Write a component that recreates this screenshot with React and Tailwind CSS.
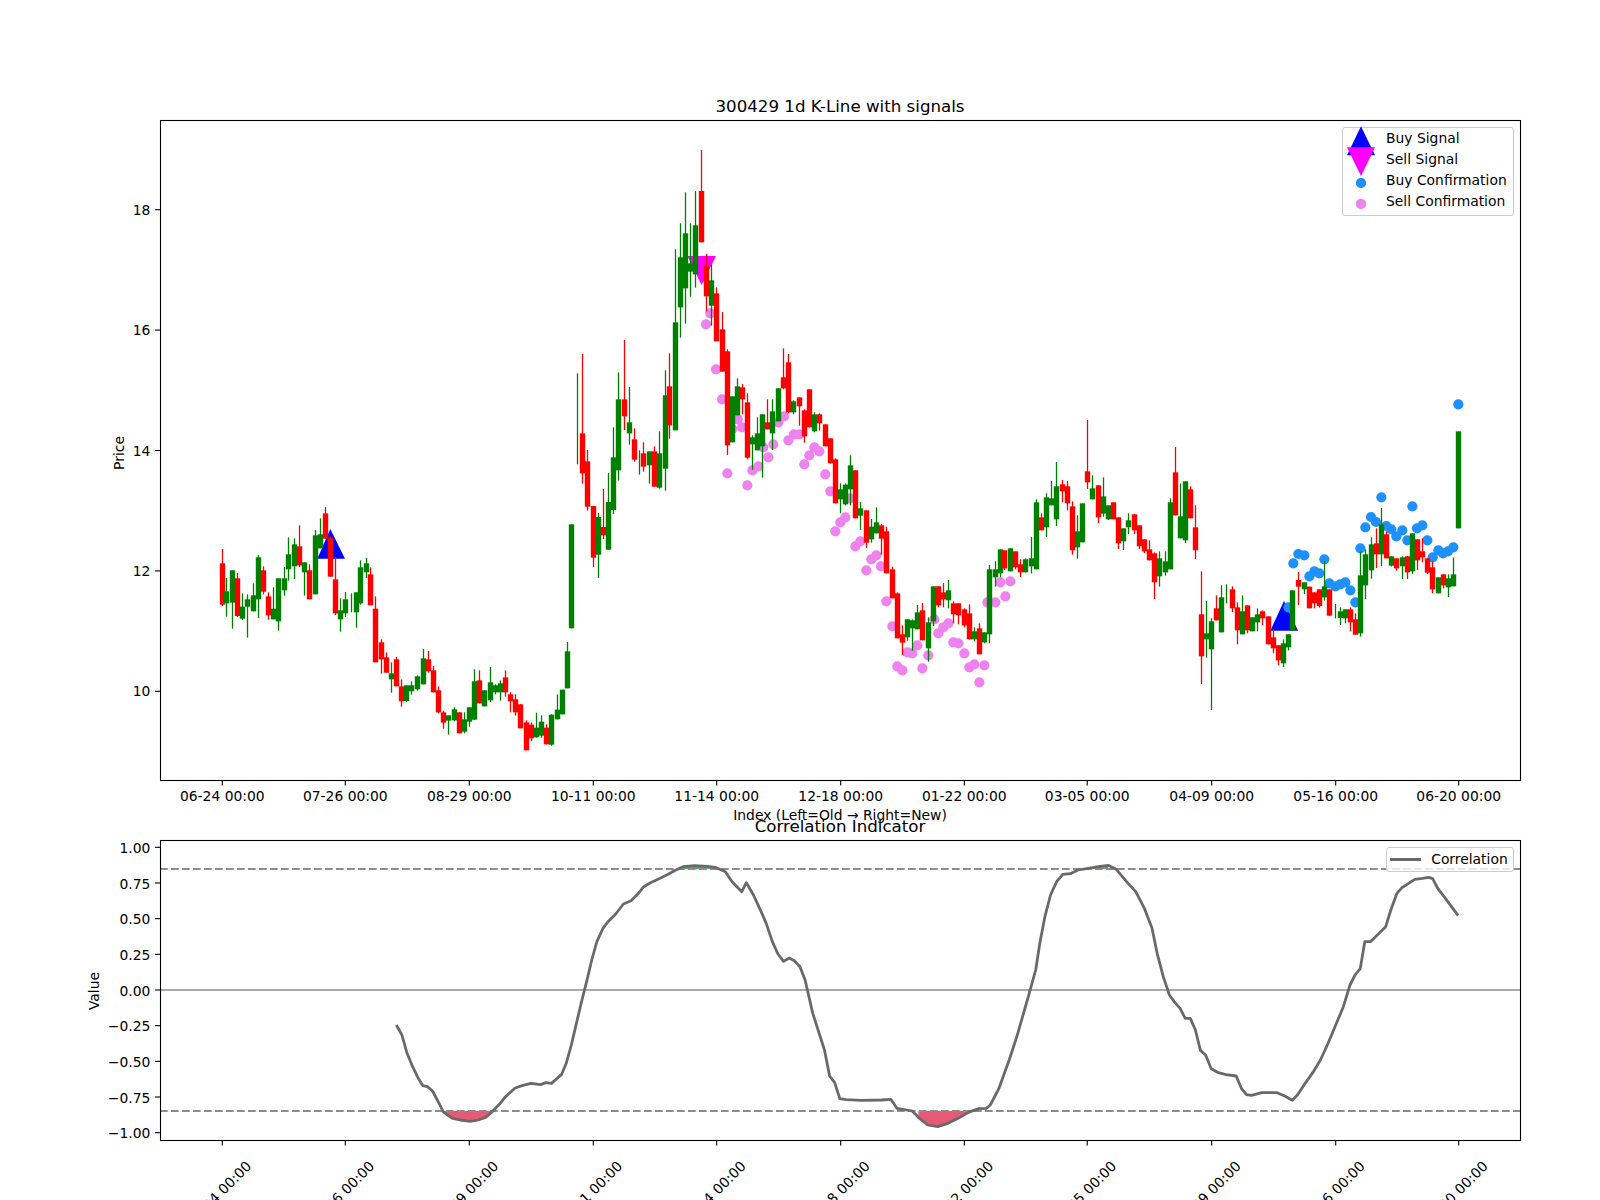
const RED = "#ff0000";
const GREEN = "#008000";

// [x, isRed, wickTop, bodyTop, bodyBottom, wickBottom] measured in crop coordinates
const seg = (x0, y0, rows) =>
  rows.map(([x, r, wt, bt, bb, wb]) => ({
    x: x0 + x / 3,
    r,
    wt: y0 + wt / 3,
    bt: y0 + bt / 3,
    bb: y0 + bb / 3,
    wb: y0 + wb / 3,
  }));

const candles = [
  ...seg(150, 380, [
    [216,1,507,550,674,678],[230,0,594,634,670,710],[246,0,571,571,668,746],[261,1,579,595,708,711],
    [276,0,640,680,716,720],[293,0,643,658,680,773],[309,0,610,646,694,694],[324,0,525,532,658,714],
    [339,1,559,571,635,643],[354,1,637,649,706,719],[369,0,622,686,718,718],[384,0,595,595,724,752],
    [402,0,561,595,631,647],[416,0,472,523,568,602],[432,0,475,493,559,597],[447,1,436,499,556,561],
    [462,0,547,547,577,647],[477,1,553,571,658,658],[495,0,450,466,643,643],[510,0,415,463,505,505],
    [525,1,381,400,476,476],[540,1,470,473,590,590],[555,1,529,598,700,705],[570,0,655,691,718,755],
    [585,0,636,658,700,711],[604,0,640,640,640,697],[618,0,637,637,697,743],[632,0,541,562,670,674],
    [648,0,534,550,577,594],[662,1,562,583,676,676],[677,1,649,686,847,847],[695,1,778,787,838,881],
    [710,1,817,832,878,878],[725,0,847,880,898,938],[740,1,831,838,919,919],[755,1,898,919,964,980],
    [770,0,916,916,963,966],[785,0,904,916,934,944],[803,0,886,889,928,932],[819,0,807,835,913,913],
    [834,1,813,838,874,878],[849,1,858,871,937,937],[864,1,919,931,997,1000],[879,1,992,997,1028,1046],
    [894,0,1006,1006,1022,1064],[912,0,982,988,1021,1024],[927,1,997,997,1060,1060],[942,0,997,1018,1055,1060],
    [957,0,982,982,1025,1040],[972,0,868,904,1019,1020],[987,1,871,901,970,970],[1004,0,931,931,979,979],
    [1020,0,861,907,961,966],[1035,0,913,916,937,943],[1050,0,901,910,937,962],[1065,1,871,892,937,950],
    [1080,1,937,943,964,997],[1095,1,943,958,997,1007],[1112,1,973,973,1045,1045],[1128,1,1021,1027,1111,1111],
    [1143,1,1027,1034,1075,1084],[1158,0,998,1043,1072,1073],[1173,0,1006,1025,1067,1073],[1188,1,1033,1043,1093,1093],
    [1205,0,1003,1004,1094,1097],[1221,0,943,989,1018,1018],[1236,0,929,929,1003,1003],[1251,0,786,814,925,925],
    [1265,0,433,433,745,745],
  ]),
  ...seg(570, 130, [
    [22,0,730,730,730,1003],[37,1,672,910,1030,1061],[53,1,960,994,1130,1142],
  ]),
  ...seg(570, 480, [
    [69,1,78,78,233,261],[84,0,99,111,224,294],[99,1,27,141,166,177],[114,0,-21,66,209,209],
  ]),
  ...seg(570, 130, [
    [130,0,892,982,1140,1152],[145,0,727,808,1021,1052],[162,1,630,808,859,900],[177,0,771,877,910,944],
    [192,1,895,928,989,995],[207,0,961,961,961,1034],[221,1,937,970,1010,1025],[237,0,964,964,1006,1061],
    [254,1,949,964,1070,1070],[269,0,904,970,1073,1076],[285,0,721,796,1016,1082],[298,1,670,769,886,926],
    [315,0,358,577,901,901],[331,0,280,382,532,623],[345,0,187,310,475,581],[362,0,280,400,425,500],
    [377,0,183,286,433,473],[393,1,60,183,337,337],[408,1,372,408,499,545],[423,0,403,451,527,587],
    [438,1,472,490,634,634],[456,1,546,598,725,725],[471,1,658,664,946,975],[486,0,799,799,937,937],
    [501,0,745,769,856,856],[516,1,762,772,808,853],[531,1,790,817,983,988],[546,0,916,922,943,1019],
    [563,0,862,910,961,961],[578,0,853,853,949,1043],[593,1,808,877,898,898],[608,0,808,844,910,960],
    [624,0,775,775,874,874],[639,1,655,742,775,778],[654,1,672,697,847,850],[671,0,811,814,847,853],
    [687,1,802,802,829,887],[702,1,838,841,919,938],[717,1,778,778,892,892],[732,0,847,853,904,907],
    [747,1,850,853,880,902],[765,1,883,883,949,949],[780,1,925,925,1000,1000],[795,1,985,988,1120,1120],
    [810,0,1060,1078,1108,1150],[825,0,1060,1064,1123,1126],[840,0,976,1006,1078,1126],[855,1,1021,1021,1165,1165],
  ]),
  ...seg(800, 400, [
    [182,0,306,325,347,390],[198,1,331,331,428,444],[213,0,357,380,418,428],[228,0,322,367,400,400],
    [243,1,372,376,416,464],[258,1,380,394,520,520],[276,1,500,508,595,595],[291,1,577,580,715,715],
    [306,1,676,703,728,765],[321,0,658,658,712,722],[336,0,658,661,685,752],[351,0,615,637,688,688],
    [366,1,609,631,721,721],[384,0,652,667,745,785],[399,0,559,559,664,678],[414,1,559,559,616,622],
    [429,1,549,577,598,622],[444,0,540,571,601,625],[459,1,604,610,643,670],[474,1,610,610,646,673],
    [492,1,625,628,676,682],[507,1,613,640,718,718],[522,0,682,694,718,724],[537,1,670,685,763,763],
    [552,0,697,697,727,730],[567,0,495,508,703,730],[585,0,484,508,532,560],[600,0,448,448,520,532],
    [614,1,451,451,505,510],[630,0,445,445,514,514],[645,1,454,454,502,508],[660,1,478,493,517,531],
    [675,0,475,478,517,517],[693,0,411,475,499,520],[708,0,298,307,508,508],[723,1,340,352,391,391],
    [738,0,280,292,382,411],[753,0,243,295,316,316],[768,0,186,259,358,378],[786,1,240,253,274,307],
    [801,1,243,259,310,331],[816,1,304,319,451,464],[831,0,346,394,442,476],[846,0,310,310,427,427],
    [861,1,60,214,247,267],[876,0,226,265,298,298],[894,1,256,256,352,369],
  ]),
  ...seg(1080, 400, [
    [69,0,232,289,341,350],[84,0,316,316,358,360],[99,1,307,307,358,358],[114,1,352,352,430,447],
    [129,0,385,385,424,450],[144,0,340,361,382,402],[162,1,343,343,391,402],[177,1,376,376,439,447],
    [192,1,418,418,454,459],[207,1,421,448,481,481],[222,1,457,460,547,597],[237,0,454,475,529,560],
    [255,0,454,484,517,527],[270,0,295,307,508,508],[285,1,141,217,346,346],[300,0,250,349,415,415],
    [315,0,244,244,421,429],[330,1,259,268,355,355],[345,1,316,382,451,477],[363,1,514,643,769,852],
    [378,0,603,700,718,773],[393,0,655,664,748,930],[408,1,586,625,661,661],[423,0,556,592,697,697],
    [438,0,553,553,553,610],[456,1,559,568,625,636],[471,1,607,622,691,733],[486,0,586,634,703,703],
    [501,1,616,616,691,700],[516,0,652,652,694,694],[531,0,625,643,667,694],[546,1,631,634,655,676],
    [564,1,649,649,733,733],[579,1,688,712,745,760],[594,1,736,736,781,796],[609,0,718,730,790,801],
    [624,0,703,703,742,751],
  ]),
  ...seg(1260, 390, [
    [98,0,601,601,722,722],[114,1,546,570,590,645],[132,0,577,577,598,612],[147,1,590,590,655,655],
    [162,1,607,607,640,655],[177,1,598,598,648,653],[192,0,513,589,622,632],[207,1,598,598,677,677],
    [226,0,642,642,642,685],[240,0,652,664,684,705],[255,0,658,658,685,700],[270,1,652,658,697,724],
    [285,1,670,688,734,734],[300,0,484,556,730,740],[315,0,478,493,586,627],[333,0,442,463,541,566],
    [348,1,415,460,493,534],[363,0,354,403,493,528],[378,1,424,433,505,505],[393,0,499,499,527,530],
    [408,1,505,505,535,542],[426,0,499,502,529,567],[441,1,499,499,547,567],[456,0,430,430,544,552],
    [471,1,448,448,511,540],[486,1,445,484,502,517],[501,1,505,505,548,552],[516,1,514,532,598,610],
    [534,0,562,562,610,610],[549,1,553,553,586,595],[564,0,553,565,592,621],[579,0,502,553,589,589],
    [594,0,124,124,415,415],
  ]),
];

const pts = (x0, y0, rows) => rows.map(([x, y]) => [x0 + x / 3, y0 + y / 3]);

const sellDots = [
  ...pts(570, 130, [
    [421,550],[408,583],[438,718],[456,808],[472,1030],[487,897],[516,892],[503,868],[532,1066],[547,1021],
    [565,1009],[580,952],[595,982],[610,943],[625,877],[642,859],[655,931],[672,913],[688,913],
  ]),
  ...pts(800, 400, [
    [13,193],[28,166],[43,142],[58,154],[76,223],[91,274],[150,295],[106,394],[121,367],[136,352],[166,439],
    [181,424],[199,511],[214,478],[229,466],[243,499],[259,604],[277,679],[292,799],[307,811],[322,757],
    [337,760],[352,736],[367,805],[385,766],[403,658],[415,700],[430,682],[445,670],[460,727],[475,730],
    [493,760],[508,802],[523,793],[538,847],[553,796],[562,607],[586,607],[601,547],[616,589],[631,544],
  ]),
];

const buyDots = pts(1260, 390, [
  [85,652],[100,520],[115,492],[133,496],[148,559],[163,544],[178,550],[193,508],[208,580],[226,589],
  [241,583],[256,577],[271,601],[286,637],[301,475],[316,412],[333,381],[348,396],[364,322],[379,408],
  [394,418],[409,439],[427,421],[442,451],[457,349],[471,415],[487,406],[502,451],[518,502],[535,481],
  [549,490],[564,484],[580,472],[595,43],
]);

const curveA = [
  [620,735],[631,765],[641,820],[652,860],[663,895],[672,917],[681,920],[691,933],[702,965],[712,995],[721,1006],
  [730,1015],[745,1020],[765,1024],[780,1020],[795,1012],[806,998],[822,973],[834,950],[853,924],[868,916],[884,910],
  [903,914],[913,908],[924,910],[944,883],[953,850],[963,795],[973,730],[983,665],[993,605],[1003,540],[1013,485],
  [1025,445],[1035,425],[1050,402],[1065,372],[1080,362],[1093,343],[1105,320],[1120,307],[1135,296],[1150,285],
  [1165,272],[1182,260],[1205,257],[1230,259],[1245,262],[1265,275],[1278,305],[1297,335],[1306,308],[1320,345],
  [1335,395],[1345,430],[1357,485],[1368,522],[1379,544],[1390,534],[1400,542],
];
const curveB = [
  [0,560],[10,600],[25,700],[48,810],[58,888],[68,908],[78,956],[90,959],[120,961],[160,960],[178,958],[190,985],
  [220,993],[232,1012],[250,1035],[270,1040],[290,1030],[310,1015],[330,997],[350,986],[365,985],[373,975],[390,925],
  [410,840],[425,770],[440,690],[452,625],[462,570],[470,490],[480,410],[491,345],[503,305],[515,283],[530,281],
  [545,270],[565,265],[585,260],[604,256],[620,268],[640,305],[658,335],[675,385],[690,445],[700,520],[712,590],
  [724,645],[735,668],[745,685],[755,715],[765,715],[775,750],[785,812],[795,825],[806,866],[820,878],[835,884],
  [855,888],[865,925],[875,944],[885,946],[905,938],[935,938],[950,948],[965,961],[975,945],[990,910],[1005,878],
  [1020,840],[1035,790],[1050,735],[1065,680],[1078,615],[1088,585],[1098,566],[1107,485],[1118,485],[1133,463],
  [1148,440],[1158,390],[1170,340],[1180,323],[1205,298],[1220,295],[1232,292],[1240,296],[1250,325],[1265,355],[1290,407],
];
const curve = [
  ...curveA.map(([x, y]) => [80 + x / 1.96, 780 + y / 3]),
  ...curveB.map(([x, y]) => [800 + x / 1.96, 780 + y / 3]),
];

const UPPER = 869;
const LOWER = 1111;

// Contiguous stretches of the curve that lie beyond a threshold, closed along it
const regions = (test, level) => {
  const out = [];
  let cur = [];
  curve.forEach((p) => {
    if (test(p[1])) cur.push(p);
    else if (cur.length) {
      out.push(cur);
      cur = [];
    }
  });
  return out.map((r) => [[r[0][0], level], ...r, [r[r.length - 1][0], level]]);
};
const toPoints = (a) => a.map((p) => p.join(",")).join(" ");

const xTicks = [
  [222.3, "06-24 00:00"],[345.3, "07-26 00:00"],[469.3, "08-29 00:00"],[593.3, "10-11 00:00"],
  [716.7, "11-14 00:00"],[840.7, "12-18 00:00"],[964.3, "01-22 00:00"],[1087.2, "03-05 00:00"],
  [1211.7, "04-09 00:00"],[1335.7, "05-16 00:00"],[1458.7, "06-20 00:00"],
];
const priceTicks = [10, 12, 14, 16, 18].map((p) => [691.3 - (p - 10) * 60.2, String(p)]);
const valueTicks = [1, 0.75, 0.5, 0.25, 0, -0.25, -0.5, -0.75, -1].map((v) => [
  990 - v * 142.7,
  (v < 0 ? "\u2212" : "") + Math.abs(v).toFixed(2),
]);

const YAxis = ({ ticks, dy }) =>
  ticks.map(([y, label]) => (
    <g key={label}>
      <line x1={155.1} x2={160} y1={y} y2={y} stroke="#000" strokeWidth={1.1} />
      <text x={150.3} y={y + dy} textAnchor="end" className="text-[13.89px]">{label}</text>
    </g>
  ));

const Candles = () =>
  candles.map((c, i) => {
    const color = c.r ? RED : GREEN;
    const cx = Math.round(c.x - 0.5) + 0.5;
    return (
      <g key={i}>
        <line x1={cx} x2={cx} y1={c.wt} y2={c.wb} stroke={color} strokeWidth={1.3} />
        {c.bb > c.bt && <rect x={cx - 2.7} y={c.bt} width={5.4} height={c.bb - c.bt} fill={color} />}
      </g>
    );
  });

const PriceChart = () => (
  <svg width="1360" height="660" viewBox="160 120 1360 660" className="block overflow-visible">
    <polygon points="330.3,529 345,558.7 317.3,558.7" fill="#0000ff" />
    <polygon points="1284,601 1298,630.7 1270.3,630.7" fill="#0000ff" />
    <polygon points="687.3,256 716,256 701.7,285" fill="#ff00ff" />
    {sellDots.map(([x, y], i) => <circle key={i} cx={x} cy={y} r={5.1} fill="#ee82ee" />)}
    {buyDots.map(([x, y], i) => <circle key={i} cx={x} cy={y} r={5.1} fill="#1e90ff" />)}
    <Candles />
    <rect x="160.5" y="120.5" width="1360" height="660" fill="none" stroke="#000" strokeWidth={1.1} />
    <YAxis ticks={priceTicks} dy={5} />
    {xTicks.map(([x, label]) => (
      <g key={label}>
        <line x1={x} x2={x} y1={780} y2={785.4} stroke="#000" strokeWidth={1.1} />
        <text x={x} y={801} textAnchor="middle" className="text-[13.89px]">{label}</text>
      </g>
    ))}
    <text x={0} y={0} transform="translate(124 453) rotate(-90)" textAnchor="middle" className="text-[13.89px]">Price</text>
  </svg>
);

const CorrelationChart = () => (
  <svg width="1360" height="300" viewBox="160 840 1360 300" className="block overflow-visible">
    {regions((y) => y > LOWER, LOWER).map((r, i) => (
      <polygon key={i} points={toPoints(r)} fill="#e65a76" />
    ))}
    {regions((y) => y < UPPER, UPPER).map((r, i) => (
      <polygon key={i} points={toPoints(r)} fill="#32cd32" />
    ))}
    <line x1={160} x2={1520} y1={990} y2={990} stroke="#aaaaaa" strokeWidth={2} />
    <line x1={160} x2={1520} y1={UPPER} y2={UPPER} stroke="#8c8c8c" strokeWidth={2} strokeDasharray="7.7 3.3" />
    <line x1={160} x2={1520} y1={LOWER} y2={LOWER} stroke="#8c8c8c" strokeWidth={2} strokeDasharray="7.7 3.3" />
    <polyline points={toPoints(curve)} fill="none" stroke="#696969" strokeWidth={2.78} strokeLinejoin="round" />
    <rect x="160.5" y="840.5" width="1360" height="300" fill="none" stroke="#000" strokeWidth={1.1} />
    <YAxis ticks={valueTicks} dy={5.7} />
    {xTicks.map(([x, label]) => (
      <g key={label}>
        <line x1={x} x2={x} y1={1140} y2={1145.4} stroke="#000" strokeWidth={1.1} />
        <text
          x={0}
          y={5}
          transform={`translate(${x - 3.5} 1193.5) rotate(-45)`}
          textAnchor="middle"
          className="text-[13.89px]"
        >
          {label}
        </text>
      </g>
    ))}
    <text x={0} y={0} transform="translate(99 991) rotate(-90)" textAnchor="middle" className="text-[13.89px]">Value</text>
  </svg>
);

const Marker = ({ children }) => (
  <svg width="28" height="21" viewBox="-14 -10.5 28 21" className="block shrink-0 overflow-visible">
    {children}
  </svg>
);

const legendRows = [
  ["Buy Signal", <polygon points="0,-12.3 14,16.7 -14,16.7" fill="#0000ff" />],
  ["Sell Signal", <polygon points="-14,-12.3 14,-12.3 0,16.4" fill="#ff00ff" />],
  ["Buy Confirmation", <circle cy="2.4" r="5.2" fill="#1e90ff" />],
  ["Sell Confirmation", <circle cy="2.4" r="5.2" fill="#ee82ee" />],
];

const SignalLegend = () => (
  <div className="absolute left-[1182px] top-[7px] w-[172px] h-[89px] bg-white/80 border border-[#cccccc] rounded-[3px] pl-[4px] flex flex-col">
    {legendRows.map(([label, mark]) => (
      <div key={label} className="flex items-center gap-[11px] h-[20.9px] leading-[20.9px] whitespace-nowrap">
        <Marker>{mark}</Marker>
        <span>{label}</span>
      </div>
    ))}
  </div>
);

const CorrelationLegend = () => (
  <div className="absolute left-[1226px] top-[7px] w-[128px] h-[25px] bg-white/80 border border-[#cccccc] rounded-[3px] pl-[3px] flex items-center gap-[10.6px] whitespace-nowrap">
    <div className="w-[30.6px] h-[2.8px] bg-[#696969]" />
    <span>Correlation</span>
  </div>
);

export default function App() {
  return (
    <div className="w-[1600px] h-[1200px] overflow-hidden bg-white text-black text-[13.89px] [font-family:'DejaVu_Sans',sans-serif]">
      <div className="pt-[95px] mb-[1px] ml-[160px] w-[1360px] text-center text-[16.67px] leading-[24px]">
        300429 1d K-Line with signals
      </div>
      <div className="relative ml-[160px] w-[1360px] h-[660px]">
        <PriceChart />
        <SignalLegend />
      </div>
      <div className="mt-[27px] ml-[160px] w-[1360px] text-center leading-[16px]">
        Index (Left=Old → Right=New)
      </div>
      <div className="-mt-[8px] mb-[1px] ml-[160px] w-[1360px] text-center text-[16.67px] leading-[24px]">
        Correlation Indicator
      </div>
      <div className="relative ml-[160px] w-[1360px] h-[300px]">
        <CorrelationChart />
        <CorrelationLegend />
      </div>
    </div>
  );
}
